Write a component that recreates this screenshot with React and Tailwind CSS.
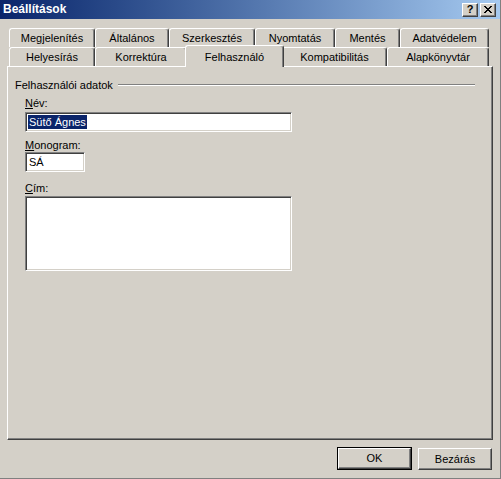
import React from 'react';

const FONT = { fontFamily: '"Liberation Sans", Arial, sans-serif' };

const Tab = ({ label, className = '', selected = false }) => (
  <div
    className={`${className} ${
      selected ? 'h-[22px] -mt-[2px] -mx-[2px] relative z-10' : 'h-[19px]'
    } flex items-center justify-center pt-[1px] bg-[#d4d0c8] border-t border-l border-white border-r border-r-[#404040] rounded-t-[3px] shadow-[inset_-1px_0_0_#808080] text-black whitespace-nowrap`}
  >
    {label}
  </div>
);

const Sunken = ({ className = '', children }) => (
  <div
    className={`${className} bg-white border border-t-[#808080] border-l-[#808080] border-b-white border-r-white shadow-[inset_1px_1px_0_#404040,inset_-1px_-1px_0_#d4d0c8]`}
  >
    {children}
  </div>
);

const App = () => {
  return (
    <div
      className="w-[501px] h-[479px] bg-[#d4d0c8] flex flex-col border-r border-b border-[#808080] text-[11px] leading-[13px] text-black overflow-hidden"
      style={FONT}
    >
      {/* title bar */}
      <div className="h-[19px] flex items-center justify-between bg-gradient-to-r from-[#0a246a] to-[#a6caf0] pl-[3px] pr-[4px]">
        <span className="text-white font-bold text-[12px]">Beállítások</span>
        <div className="flex gap-[2px]">
          <div className="w-[16px] h-[14px] bg-[#d4d0c8] border border-t-white border-l-white border-b-[#404040] border-r-[#404040] shadow-[inset_-1px_-1px_0_#808080] flex items-center justify-center font-bold text-[11px] leading-none">
            ?
          </div>
          <div className="w-[16px] h-[14px] bg-[#d4d0c8] border border-t-white border-l-white border-b-[#404040] border-r-[#404040] shadow-[inset_-1px_-1px_0_#808080] flex items-center justify-center">
            <svg width="8" height="7" viewBox="0 0 8 7" shapeRendering="crispEdges">
              <path d="M0 0h2v1h-2zM6 0h2v1h-2zM1 1h2v1h-2zM5 1h2v1h-2zM2 2h4v1h-4zM3 3h2v1h-2zM2 4h4v1h-4zM1 5h2v1h-2zM5 5h2v1h-2zM0 6h2v1h-2zM6 6h2v1h-2z" fill="#000" />
            </svg>
          </div>
        </div>
      </div>

      {/* tabs */}
      <div className="mt-[9px] ml-[9px] flex flex-col">
        <div className="flex h-[19px]">
          <Tab label="Megjelenítés" className="w-[86px]" />
          <Tab label="Általános" className="w-[74px]" />
          <Tab label="Szerkesztés" className="w-[86px]" />
          <Tab label="Nyomtatás" className="w-[80px]" />
          <Tab label="Mentés" className="w-[65px]" />
          <Tab label="Adatvédelem" className="w-[89px]" />
        </div>
        <div className="flex items-start h-[19px]">
          <Tab label="Helyesírás" className="w-[86px]" />
          <Tab label="Korrektúra" className="w-[92px]" />
          <Tab label="Felhasználó" className="w-[99px]" selected />
          <Tab label="Kompatibilitás" className="w-[105px]" />
          <Tab label="Alapkönyvtár" className="w-[102px]" />
        </div>
      </div>

      {/* panel */}
      <div className="ml-[7px] w-[486px] h-[374px] border border-t-white border-l-white border-b-[#404040] border-r-[#404040] shadow-[inset_-1px_-1px_0_#808080] flex flex-col">
        <div className="mt-[11px] flex items-center pl-[7px] pr-[17px] h-[14px]">
          <span className="whitespace-nowrap">Felhasználói adatok</span>
          <div className="flex-1 ml-[5px] border-t border-[#808080] border-b border-b-white" />
        </div>

        <div className="pl-[17px] flex flex-col">
          <div className="mt-[5px] h-[13px]">
            <span className="underline underline-offset-1">N</span>év:
          </div>
          <Sunken className="mt-[2px] w-[267px] h-[20px] flex items-center pl-[2px]">
            <span className="bg-[#0a246a] text-white px-[1px] leading-[14px]">Sütő Ágnes</span>
          </Sunken>

          <div className="mt-[7px] h-[13px]">
            <span className="underline underline-offset-1">M</span>onogram:
          </div>
          <Sunken className="w-[60px] h-[20px] flex items-center pl-[3px]">SÁ</Sunken>

          <div className="mt-[10px] h-[13px]">
            <span className="underline underline-offset-1">C</span>ím:
          </div>
          <Sunken className="mt-[1px] w-[267px] h-[75px]" />
        </div>
      </div>

      {/* buttons */}
      <div className="mt-[7px] flex justify-end pr-[8px]">
        <div className="w-[75px] h-[23px] border border-black flex">
          <div className="flex-1 border border-t-white border-l-white border-b-[#404040] border-r-[#404040] shadow-[inset_-1px_-1px_0_#808080] flex items-center justify-center">
            OK
          </div>
        </div>
        <div className="ml-[6px] mt-[1px] w-[74px] h-[22px] border border-t-white border-l-white border-b-[#404040] border-r-[#404040] shadow-[inset_-1px_-1px_0_#808080] flex items-center justify-center">
          Bezárás
        </div>
      </div>
    </div>
  );
};

export default App;
